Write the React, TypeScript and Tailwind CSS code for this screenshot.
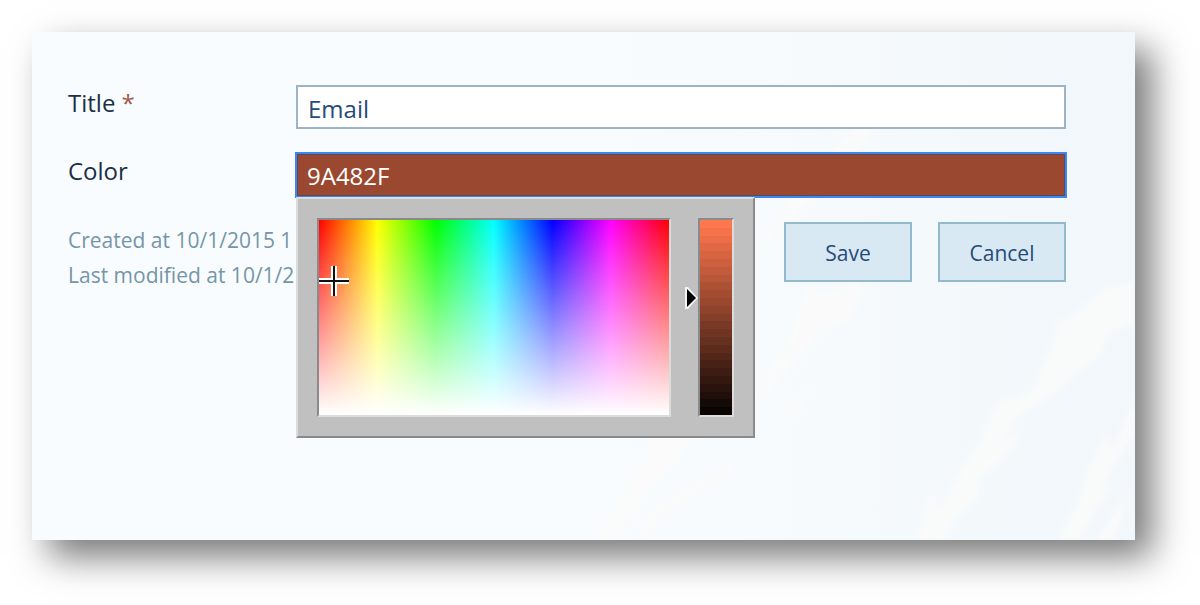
import { useState } from 'react';
import type { ReactNode } from 'react';

const HUE = 14.02;
const SATURATION = 0.6948;
const STEPS = 25;

function toRgb(value: number) {
  const f = HUE / 60;
  return [
    Math.round(value),
    Math.round(value * (1 - SATURATION * (1 - f))),
    Math.round(value * (1 - SATURATION)),
  ];
}

function toHex(value: number) {
  return toRgb(value)
    .map((c) => c.toString(16).padStart(2, '0'))
    .join('')
    .toUpperCase();
}

function Wheat() {
  return (
    <svg
      className="absolute inset-0 h-full w-full"
      viewBox="0 0 1103 508"
      preserveAspectRatio="xMaxYMax slice"
      fill="#fbfbfa"
      aria-hidden="true"
    >
      <defs>
        <filter id="soft">
          <feGaussianBlur stdDeviation="3" />
        </filter>
      </defs>
      <g filter="url(#soft)" opacity=".85">
        <path d="M722 212 L752 178 L778 142 L806 112 L836 84 L842 98 L826 118 L812 138 L788 162 L764 186 L742 204 L724 226Z" />
        <path d="M776 252 L790 262 L830 250 L832 262 L818 286 L790 304 L764 330 L740 356 L722 376 L722 358 L750 318Z" />
        <path d="M748 384 L780 356 L764 382 L740 398Z" />
        <path d="M562 508 L580 478 L600 446 L614 426 L612 400 L620 380 L632 396 L660 380 L704 386 L684 400 L656 414 L640 436 L616 462 L596 488 L582 508Z" />
        <path d="M604 508 L618 484 L646 460 L702 428 L696 442 L656 468 L626 490 L612 508Z" />
        <path d="M884 508 L900 458 L906 482 L930 436 L950 406 L966 370 L1000 360 L1018 318 L1026 292 L1050 276 L1072 256 L1103 250 L1103 292 L1078 300 L1066 326 L1040 344 L1032 354 L1004 374 L984 386 L966 416 L948 440 L946 464 L922 490 L912 508Z" />
        <path d="M946 444 L966 414 L990 394 L982 414 L960 438Z" />
        <path d="M1026 508 L1048 464 L1056 436 L1074 400 L1080 418 L1103 366 L1103 398 L1082 436 L1068 460 L1088 444 L1064 478 L1046 508Z" />
        <path d="M1064 508 L1084 478 L1094 456 L1090 488 L1078 508Z" />
      </g>
    </svg>
  );
}

function Row({ id, label, children }: { id: string; label: ReactNode; children: ReactNode }) {
  return (
    <div className="flex items-start">
      <label htmlFor={id} className="w-[228px] shrink-0 text-2xl leading-9 text-[#1b2f47]">
        {label}
      </label>
      <div className="relative min-w-0 flex-1">{children}</div>
    </div>
  );
}

function ColorPicker({ value, onChange }: { value: number; onChange: (v: number) => void }) {
  return (
    <div className="absolute top-11 left-0 z-10 flex w-[459px] gap-[27px] border-2 border-t-[#dcdcdc] border-r-[#8a8a8a] border-b-[#8a8a8a] border-l-[#dcdcdc] bg-[#c0c0c0] p-[19px]">
      {/* Hue / saturation field */}
      <div className="h-[199px] flex-1 border-2 border-t-[#8a8a8a] border-r-[#dcdcdc] border-b-[#dcdcdc] border-l-[#8a8a8a]">
        <div className="relative h-full bg-[linear-gradient(to_bottom,transparent,#fff),linear-gradient(to_right,#f00,#ff0,#0f0,#0ff,#00f,#f0f,#f00)]">
          <svg
            className="absolute -translate-x-1/2 -translate-y-1/2"
            style={{ left: `${(HUE / 360) * 100 + 0.4}%`, top: `${(1 - SATURATION) * 100 + 1}%` }}
            width="30"
            height="30"
            viewBox="0 0 30 30"
            aria-hidden="true"
          >
            <path d="M15 0V30M0 15H30" stroke="#fff" strokeWidth="6" />
            <path d="M15 0V30M0 15H30" stroke="#111" strokeWidth="2" />
          </svg>
        </div>
      </div>

      {/* Brightness bar */}
      <div className="relative h-[199px] w-9 border-2 border-t-[#8a8a8a] border-r-[#dcdcdc] border-b-[#dcdcdc] border-l-[#8a8a8a]">
        <div className="flex h-full flex-col">
          {Array.from({ length: STEPS }, (_, i) => (
            <div
              key={i}
              className="flex-1"
              style={{ backgroundColor: `rgb(${toRgb(255 * (1 - i / STEPS)).join(',')})` }}
            />
          ))}
        </div>
        <svg
          className="absolute -left-4 -translate-y-1/2"
          style={{ top: `${(1 - value / 255) * 100 + 0.5}%` }}
          width="14"
          height="22"
          viewBox="0 0 14 22"
          aria-hidden="true"
        >
          <path d="M1 0H4L14 11L4 22H1Z" fill="#f4f4f4" />
          <path d="M3 2L12 11L3 20Z" fill="#000" />
        </svg>
        <input
          type="range"
          aria-label="Brightness"
          min={0}
          max={255}
          value={value}
          onChange={(e) => onChange(Number(e.target.value))}
          className="absolute inset-0 h-full w-full cursor-pointer opacity-0 [direction:rtl] [writing-mode:vertical-lr]"
        />
      </div>
    </div>
  );
}

export default function App() {
  const [title, setTitle] = useState('Email');
  const [value, setValue] = useState(154);

  const buttonClass =
    'h-[60px] w-32 border-2 border-[#93b9cd] bg-[#d9e9f4] pt-1 text-[21px] text-[#264b78] hover:bg-[#cbe1f0]';

  return (
    <div className="flex min-h-screen bg-white pt-8 pr-[65px] pb-[65px] pl-8 font-['Open_Sans','Noto_Sans',sans-serif]">
      <form
        className="relative flex-1 bg-linear-to-r from-[#f9fcfe] via-[#f8fcfe] to-[#f2f7fb] pt-[53px] pr-[69px] pb-8 pl-9 shadow-[17px_17px_34px_rgba(0,0,0,0.53)]"
        onSubmit={(e) => e.preventDefault()}
      >
        <Wheat />
        <div className="relative flex flex-col gap-6">
          <Row
            id="title"
            label={
              <>
                Title <span className="text-[#a3564a]">*</span>
              </>
            }
          >
            <input
              id="title"
              type="text"
              required
              value={title}
              onChange={(e) => setTitle(e.target.value)}
              className="block h-11 w-full border-2 border-[#9db3c6] bg-white px-2.5 pt-0.5 text-2xl text-[#264b78] outline-none"
            />
          </Row>

          <Row id="color" label="Color">
            <input
              id="color"
              type="text"
              readOnly
              value={toHex(value)}
              style={{ backgroundColor: `#${toHex(value)}` }}
              className="block h-11 w-full border border-[#3f86f5] px-2.5 text-2xl text-white ring-1 ring-[#3f86f5] inset-ring-1 inset-ring-[#5a4a55] outline-none"
            />
            <ColorPicker value={value} onChange={setValue} />
          </Row>

          <div className="flex items-start justify-between pt-px">
            <div className="pt-px text-[21px] leading-[35px] whitespace-nowrap text-[#7596a6]">
              <p>Created at 10/1/2015 1</p>
              <p>Last modified at 10/1/2</p>
            </div>
            <div className="flex gap-[26px]">
              <button type="submit" className={buttonClass}>
                Save
              </button>
              <button type="button" className={buttonClass}>
                Cancel
              </button>
            </div>
          </div>
        </div>
      </form>
    </div>
  );
}
